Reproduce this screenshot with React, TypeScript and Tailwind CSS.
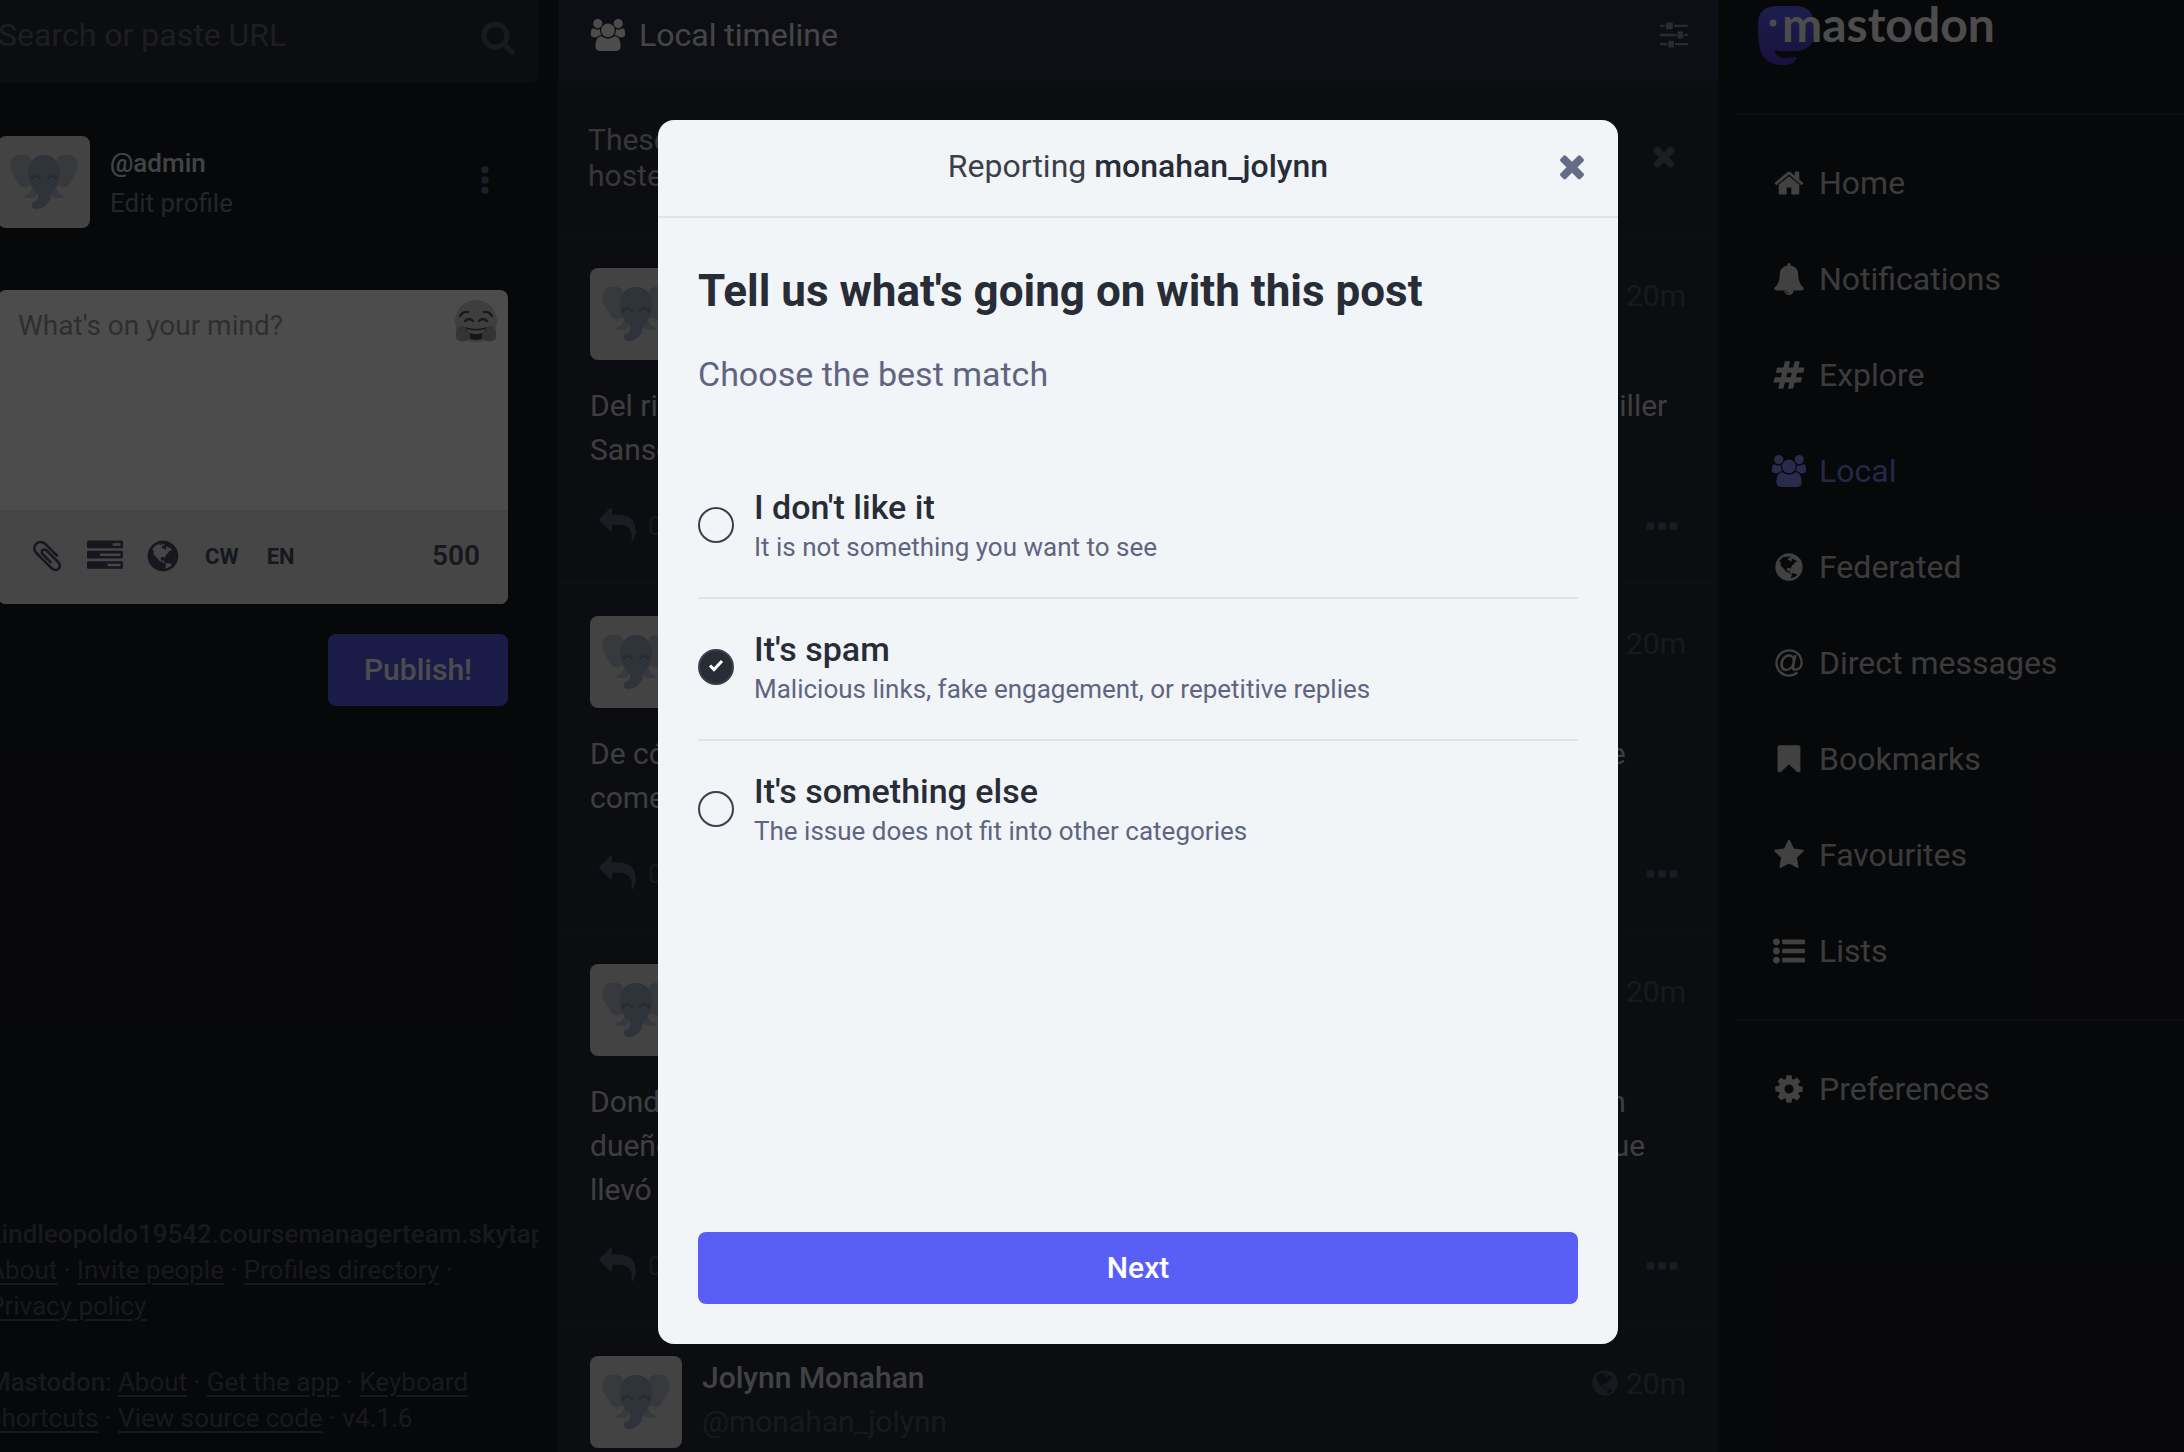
import React, { useState } from "react";

/* ---------- Icons (1792-unit grid) ---------- */

const paths = {
  home: "M1472 992v480q0 26-19 45t-45 19h-384v-384h-256v384h-384q-26 0-45-19t-19-45v-480q0-1 .5-3t.5-3l575-474 575 474q1 2 1 6zm223-69l-62 74q-8 9-21 11h-3q-13 0-21-7l-692-577-692 577q-12 8-24 7-13-2-21-11l-62-74q-8-10-7-23.5t11-21.5l719-599q32-26 76-26t76 26l244 204v-195q0-14 9-23t23-9h192q14 0 23 9t9 23v408l219 182q10 8 11 21.5t-7 23.5z",
  bell: "M912 1696q0-16-16-16-59 0-101.5-42.5t-42.5-101.5q0-16-16-16t-16 16q0 73 51.5 124.5t124.5 51.5q16 0 16-16zm816-288q0 52-38 90t-90 38h-448q0 106-75 181t-181 75-181-75-75-181h-448q-52 0-90-38t-38-90q50-42 91-88t85-119.5 74.5-158.5 50-206 19.5-260q0-152 117-282.5t307-158.5q-8-19-8-39 0-40 28-68t68-28 68 28 28 68q0 20-8 39 190 28 307 158.5t117 282.5q0 139 19.5 260t50 206 74.5 158.5 85 119.5 91 88z",
  hashtag: "M991 1024l64-256h-254l-64 256h254zm768-504l-56 224q-7 24-31 24h-327l-64 256h311q15 0 25 12 10 14 6 28l-56 224q-5 24-31 24h-327l-81 328q-7 24-31 24h-224q-16 0-26-12-9-12-6-28l78-312h-254l-81 328q-7 24-31 24h-225q-15 0-25-12-9-12-6-28l78-312h-311q-15 0-25-12-9-12-6-28l56-224q7-24 31-24h327l64-256h-311q-15 0-25-12-10-14-6-28l56-224q5-24 31-24h327l81-328q7-24 32-24h224q15 0 25 12 9 12 6 28l-78 312h254l81-328q7-24 32-24h224q15 0 25 12 9 12 6 28l-78 312h311q15 0 25 12 9 12 6 28z",
  users: "M529 896q-162 5-265 128h-134q-82 0-138-40.5t-56-118.5q0-353 124-353 6 0 43.5 21t97.5 42.5 119 21.5q67 0 133-23-5 37-5 66 0 139 81 256zm1071 637q0 120-73 189.5t-194 69.5h-874q-121 0-194-69.5t-73-189.5q0-53 3.5-103.5t14-109 26.5-108.5 43-97.5 62-81 85.5-53.5 111.5-20q10 0 43 21.5t73 48 107 48 135 21.5 135-21.5 107-48 73-48 43-21.5q61 0 111.5 20t85.5 53.5 62 81 43 97.5 26.5 108.5 14 109 3.5 103.5zm-1024-1277q0 106-75 181t-181 75-181-75-75-181 75-181 181-75 181 75 75 181zm704 384q0 159-112.5 271.5t-271.5 112.5-271.5-112.5-112.5-271.5 112.5-271.5 271.5-112.5 271.5 112.5 112.5 271.5zm576 225q0 78-56 118.5t-138 40.5h-134q-103-123-265-128 81-117 81-256 0-29-5-66 66 23 133 23 59 0 119-21.5t97.5-42.5 43.5-21q124 0 124 353zm-128-609q0 106-75 181t-181 75-181-75-75-181 75-181 181-75 181 75 75 181z",
  globe: "M896 128q209 0 385.5 103t279.5 279.5 103 385.5-103 385.5-279.5 279.5-385.5 103-385.5-103-279.5-279.5-103-385.5 103-385.5 279.5-279.5 385.5-103zm274 521q-2 1-9.5 9.5t-13.5 9.5q2 0 4.5-5t5-11 3.5-7q6-7 22-15 14-6 52-12 34-8 51 11-2-2 9.5-13t14.5-12q3-2 15-4.5t15-7.5l2-22q-12 1-17.5-7t-6.5-21q0 2-6 8 0-7-4.5-8t-11.5 1-9 1q-10-3-15-7.5t-8-16.5-4-15q-2-5-9.5-10.5t-9.5-10.5q-1-2-2.5-5.5t-3-6.5-4-5.5-5.5-2.5-7 5-7.5 10-4.5 5q-3-2-6-1.5t-4.5 1-4.5 3-5 3.5q-3 2-8.5 3t-8.5 2q15-5-1-11-10-4-16-3 9-4 7.5-12t-8.5-14h5q-1-4-8.5-8.5t-17.5-8.5-13-6q-8-5-34-9.5t-33-.5q-5 6-4.5 10.5t4 14 3.5 12.5q1 6-5.5 13t-6.5 12q0 7 14 15.5t10 21.5q-3 8-16 16t-16 12q-5 8-1.5 18.5t10.5 16.5q2 2 1.5 4t-3.5 4.5-5.5 4-6.5 3.5l-3 2q-11 5-20.5-6t-13.5-26q-7-25-16-30-23-8-29 1-5-13-41-26-25-9-58-4 6-1 0-15-7-15-19-12 3-6 4-17.5t1-13.5q3-13 12-23 1-1 7-8.5t9.5-13.5.5-6q35 4 50-11 5-5 11.5-17t10.5-17q9-6 14-5.5t14.5 5.5 14.5 5q14 1 15.5-11t-7.5-20q12 1 3-17-4-7-8-9-12-4-27 5-8 4 2 8-1-1-9.5 10.5t-16.5 17.5-16-5q-1-1-5.5-13.5t-9.5-13.5q-8 0-16 15 3-8-11-15t-24-8q19-12-8-27-7-4-20.5-5t-19.5 4q-5 7-5.5 11.5t5 8 10.5 5.5 11.5 4 8.5 3q14 10 8 14-2 1-8.5 3.5t-11.5 4.5-6 4q-3 4 0 14t-2 14q-5-5-9-17.5t-7-16.5q7 9-25 6l-10-1q-4 0-16 2t-20.5 1-13.5-8q-4-8 0-20 1-4 4-2-4-3-11-9.5t-10-8.5q-46 15-94 41 6 1 12-1 5-2 13-6.5t10-5.5q34-14 42-7l5-5q14 16 20 25-7-4-30-1-20 6-22 12 7 12 5 18-4-3-11.5-10t-14.5-11-15-5q-16 0-22 1-146 80-235 222 7 7 12 8 4 1 5 9t2.5 11 11.5-3q9 8 3 19 1-1 44 27 19 17 21 21 3 11-10 18-1-2-9-9t-9-4q-3 5 .5 18.5t10.5 12.5q-7 0-9.5 16t-2.5 35.5-1 23.5l2 1q-3 12 5.5 34.5t21.5 19.5q-13 3 20 43 6 8 8 9 3 2 12 7.5t15 10 10 10.5q4 5 10 22.5t14 23.5q-2 6 9.5 20t10.5 23q-1 0-2.5 1t-2.5 1q3 7 15.5 14t15.5 13q1 3 2 10t3 11 8 2q2-20-24-62-15-25-17-29-3-5-5.5-15.5t-4.5-14.5q2 0 6 1.5t8.5 3.5 7.5 4 2 3q-3 7 2 17.5t12 18.5 17 19 12 13q6 6 14 19.5t0 13.5q9 0 20 10.5t17 19.5q5 8 8 26t5 24q2 7 8.5 13.5t12.5 9.5l16 8 13 7q5 2 18.5 10.5t21.5 11.5q10 4 16 4t14.5-2.5 13.5-3.5q15-2 29 15t21 21q36 19 55 11-2 1 .5 7.5t8 15.5 9 14.5 5.5 8.5q5 6 18 15t18 15q6-4 7-9-3 8 7 20t18 10q14-3 14-32-31 15-49-18 0-1-2.5-5.5t-4-8.5-2.5-8.5 0-7.5 5-3q9 0 10-3.5t-2-12.5-4-13q-1-8-11-20t-12-15q-5 9-16 8t-16-9q0 1-1.5 5.5t-1.5 6.5q-13 0-15-1 1-3 2.5-17.5t3.5-22.5q1-4 5.5-12t7.5-14.5 4-12.5-4.5-9.5-17.5-2.5q-19 1-26 20-1 3-3 10.5t-5 11.5-9 7q-7 3-24 2t-24-5q-13-8-22.5-29t-9.5-37q0-10 2.5-26.5t3-25-5.5-24.5q3-2 9-9.5t10-10.5q2-1 4.5-1.5t4.5 0 4-1.5 3-6q-1-1-4-3-3-3-4-3 7 3 28.5-1.5t27.5 1.5q15 11 22-2 0-1-2.5-9.5t-.5-13.5q5 27 29 9 3 3 15.5 5t17.5 5q3 2 7 5.5t5.5 4.5 5-.5 8.5-6.5q10 14 12 24 11 40 19 44 7 3 11 2t4.5-9.5 0-14-1.5-12.5l-1-8v-18l-1-8q-15-3-18.5-12t1.5-18.5 15-18.5q1-1 8-3.5t15.5-6.5 12.5-8q21-19 15-35 7 0 11-9-1 0-5-3t-7.5-5-4.5-2q9-5 2-16 5-3 7.5-11t7.5-10q9 12 21 2 7-8 1-16 5-7 20.5-10.5t18.5-9.5q7 2 8-2t1-12 3-12q4-5 15-9t13-5l17-11q3-4 0-4 18 2 31-11 10-11-6-20 3-6-3-9.5t-15-5.5q3-1 11.5-.5t10.5-1.5q15-10-7-17-17-5-43 12zm-163 877q206-36 351-189-3-3-12.5-4.5t-12.5-3.5q-18-7-24-8 1-7-2.5-13t-8-9-12.5-8-11-7q-2-2-7-6t-7-5.5-7.5-4.5-8.5-2-10 1l-3 1q-3 1-5.5 2.5t-5.5 3-4 3 0 2.5q-21-17-36-22-5-1-11-5.5t-10.5-7-10-1.5-11.5 7q-5 5-6 15t-2 13q-7-5 0-17.5t2-18.5q-3-6-10.5-4.5t-12 4.5-11.5 8.5-9 6.5-8.5 5.5-8.5 7.5q-3 4-6 12t-5 11q-2-4-11.5-6.5t-9.5-5.5q2 10 4 35t5 38q7 31-12 48-27 25-29 40-4 22 12 26 0 7-8 20.5t-7 21.5q0 6 2 16z",
  at: "M1100 775q0-108-53.5-169t-147.5-61q-63 0-124 30.5t-110 84.5-79.5 137-30.5 180q0 112 53.5 173t150.5 61q96 0 176-66.5t122.5-166 42.5-203.5zm564 121q0 111-37 197t-98.5 135-131.5 74.5-145 27.5q-6 0-15.5.5t-16.5.5q-95 0-142-53-28-33-33-83-52 66-131.5 110t-173.5 44q-161 0-249.5-95.5t-88.5-269.5q0-157 66-290t179-210.5 246-77.5q87 0 155 35.5t106 99.5l2-19 11-56q1-6 5.5-12t9.5-6h118q5 0 13 11 5 5 3 16l-120 614q-5 24-5 48 0 39 12.5 52t44.5 13q28-1 57-5.5t73-24 77-50 57-89.5 24-137q0-292-174-466t-466-174q-130 0-248.5 51t-204 136.5-136.5 204-51 248.5 51 248.5 136.5 204 204 136.5 248.5 51q228 0 405-144 11-9 24-8t21 12l41 49q8 12 7 24-2 13-12 22-102 83-227.5 128t-258.5 45q-156 0-298-61t-245-163-163-245-61-298 61-298 163-245 245-163 298-61q344 0 556 212t212 556z",
  bookmark: "M1420 128q23 0 44 9 33 13 52.5 41t19.5 62v1289q0 34-19.5 62t-52.5 41q-19 8-44 8-48 0-83-32l-441-424-441 424q-36 33-83 33-23 0-44-9-33-13-52.5-41t-19.5-62v-1289q0-34 19.5-62t52.5-41q21-9 44-9h1048z",
  star: "M1728 647q0 22-26 48l-363 354 86 500q1 7 1 20 0 21-10.5 35.5t-30.5 14.5q-19 0-40-12l-449-236-449 236q-22 12-40 12-21 0-31.5-14.5t-10.5-35.5q0-6 2-20l86-500-364-354q-25-27-25-48 0-37 56-46l502-73 225-455q19-41 49-41t49 41l225 455 502 73q56 9 56 46z",
  list: "M384 1408q0 80-56 136t-136 56-136-56-56-136 56-136 136-56 136 56 56 136zm0-512q0 80-56 136t-136 56-136-56-56-136 56-136 136-56 136 56 56 136zm1408 416v192q0 13-9.5 22.5t-22.5 9.5h-1216q-13 0-22.5-9.5t-9.5-22.5v-192q0-13 9.5-22.5t22.5-9.5h1216q13 0 22.5 9.5t9.5 22.5zm-1408-928q0 80-56 136t-136 56-136-56-56-136 56-136 136-56 136 56 56 136zm1408 416v192q0 13-9.5 22.5t-22.5 9.5h-1216q-13 0-22.5-9.5t-9.5-22.5v-192q0-13 9.5-22.5t22.5-9.5h1216q13 0 22.5 9.5t9.5 22.5zm0-512v192q0 13-9.5 22.5t-22.5 9.5h-1216q-13 0-22.5-9.5t-9.5-22.5v-192q0-13 9.5-22.5t22.5-9.5h1216q13 0 22.5 9.5t9.5 22.5z",
  cog: "M1152 896q0-106-75-181t-181-75-181 75-75 181 75 181 181 75 181-75 75-181zm512-109v222q0 12-8 23t-20 13l-185 28q-19 54-39 91 35 50 107 138 10 12 10 25t-9 23q-27 37-99 108t-94 71q-12 0-26-9l-138-108q-44 23-91 38-16 136-29 186-7 28-36 28h-222q-14 0-24.5-8.5t-11.5-21.5l-28-184q-49-16-90-37l-141 107q-10 9-25 9-14 0-25-11-126-114-165-168-7-10-7-23 0-12 8-23 15-21 51-66.5t54-70.5q-27-50-41-99l-183-27q-13-2-21-12.5t-8-23.5v-222q0-12 8-23t19-13l186-28q14-46 39-92-40-57-107-138-10-12-10-24 0-10 9-23 26-36 98.5-107.5t94.5-71.5q13 0 26 10l138 107q44-23 91-38 16-136 29-186 7-28 36-28h222q14 0 24.5 8.5t11.5 21.5l28 184q49 16 90 37l142-107q9-9 24-9 13 0 25 10 129 119 165 170 7 8 7 22 0 12-8 23-15 21-51 66.5t-54 70.5q26 50 41 98l183 28q13 2 21 12.5t8 23.5z",
  times: "M1490 1322q0 40-28 68l-136 136q-28 28-68 28t-68-28l-294-294-294 294q-28 28-68 28t-68-28l-136-136q-28-28-28-68t28-68l294-294-294-294q-28-28-28-68t28-68l136-136q28-28 68-28t68 28l294 294 294-294q28-28 68-28t68 28l136 136q28 28 28 68t-28 68l-294 294 294 294q28 28 28 68z",
  sliders: "M128 320h256v128h-256zM896 320h768v128h-768zM512 192h256q64 0 64 64v256q0 64-64 64h-256q-64 0-64-64v-256q0-64 64-64zM128 832h896v128h-896zM1472 832h192v128h-192zM1152 704h192q64 0 64 64v256q0 64-64 64h-192q-64 0-64-64v-256q0-64 64-64zM128 1344h384v128h-384zM960 1344h704v128h-704zM640 1216h192q64 0 64 64v256q0 64-64 64h-192q-64 0-64-64v-256q0-64 64-64z",
  paperclip: "M1596 1385q0 117-79 196t-196 79q-135 0-235-100l-777-776q-113-115-113-271 0-159 110-270t269-111q158 0 273 113l605 606q10 10 10 22 0 16-30.5 46.5t-46.5 30.5q-13 0-23-10l-606-607q-79-77-181-77-106 0-179 75t-73 181q0 105 76 181l776 777q63 63 145 63 64 0 106-42t42-106q0-82-63-145l-581-581q-26-24-60-24-29 0-48 19t-19 48q0 32 25 59l410 410q10 10 10 22 0 16-31 47t-47 31q-12 0-22-10l-410-410q-63-61-63-149 0-82 57-139t139-57q88 0 149 63l581 581q100 98 100 235z",
  tasks: "M1024 1408h640v-128h-640v128zm-384-512h1024v-128h-1024v128zm640-512h384v-128h-384v128zm512 832v256q0 26-19 45t-45 19h-1664q-26 0-45-19t-19-45v-256q0-26 19-45t45-19h1664q26 0 45 19t19 45zm0-512v256q0 26-19 45t-45 19h-1664q-26 0-45-19t-19-45v-256q0-26 19-45t45-19h1664q26 0 45 19t19 45zm0-512v256q0 26-19 45t-45 19h-1664q-26 0-45-19t-19-45v-256q0-26 19-45t45-19h1664q26 0 45 19t19 45z",
  reply: "M1792 1120q0 166-127 451-3 7-10.5 24t-13.5 30-13 22q-12 17-28 17-15 0-23.5-10t-8.5-25q0-9 2.5-26.5t2.5-23.5q5-68 5-123 0-112-19.5-200.5t-54-153.5-89-112-115.5-78.5-142.5-48.5-162-25.5-174.5-7.5h-224v256q0 26-19 45t-45 19-45-19l-512-512q-19-19-19-45t19-45l512-512q19-19 45-19t45 19 19 45v256h224q713 0 875 403 53 134 53 333z",
  search: "M1216 832q0-185-131.5-316.5t-316.5-131.5-316.5 131.5-131.5 316.5 131.5 316.5 316.5 131.5 316.5-131.5 131.5-316.5zm512 832q0 52-38 90t-90 38q-54 0-90-38l-343-342q-179 124-399 124-143 0-273.5-55.5t-225-150-150-225-55.5-273.5 55.5-273.5 150-225 225-150 273.5-55.5 273.5 55.5 225 150 150 225 55.5 273.5q0 220-124 399l343 343q37 37 37 90z",
  dots: "M224 704h192q96 0 96 96v192q0 96-96 96h-192q-96 0-96-96v-192q0-96 96-96zM800 704h192q96 0 96 96v192q0 96-96 96h-192q-96 0-96-96v-192q0-96 96-96zM1376 704h192q96 0 96 96v192q0 96-96 96h-192q-96 0-96-96v-192q0-96 96-96z",
};

type IconName = keyof typeof paths;

function Icon({ name, className = "" }: { name: IconName; className?: string }) {
  return (
    <svg
      viewBox="0 0 1792 1792"
      fill="currentColor"
      aria-hidden="true"
      className={`shrink-0 overflow-visible ${className}`}
    >
      <path d={paths[name]} />
    </svg>
  );
}

function Avatar() {
  return (
    <svg viewBox="0 0 92 92" aria-hidden="true" className="h-[92px] w-[92px] shrink-0 rounded-lg bg-[#e0e0e2]">
      <g fill="#b9c0cb">
        <path d="M33 22C27 16 13 17 12.500 29c0 7 4 11 7 17 3 7 10 7 14 1z" />
        <path d="M59 22c6-6 20-5 20.500 7 0 7-4 11-7 17-3 7-10 7-14 1z" />
        <path d="M35 50c-2 6-5 9-10 10 5 4 12 3 16-4zM57 50c2 6 5 9 10 10-5 4-12 3-16-4z" />
      </g>
      <path
        d="M46 19c-11 0-16 8-16 19 0 9 4 14 10 19 1 5-1 8-5 9-3 4-1 7 4 7 9-1 14-7 14-15 5-5 9-11 9-20 0-11-5-19-16-19z"
        fill="#9dabc2"
      />
      <path d="M33 43q4-6 9 0M50 43q4-6 9 0" fill="none" stroke="#828ea6" strokeWidth="2" strokeLinecap="round" />
    </svg>
  );
}

function HugEmoji() {
  return (
    <svg viewBox="0 0 44 44" aria-hidden="true" className="h-11 w-11">
      <circle cx="22" cy="21" r="21" fill="#d0d0d0" />
      <g fill="none" stroke="#555" strokeWidth="2.4" strokeLinecap="round">
        <path d="M6 16q3-5 8-4M38 16q-3-5-8-4" />
        <path d="M11 21q4-4 8 0M25 21q4-4 8 0" />
      </g>
      <path d="M11 27q11 4 22 0-1 13-11 13T11 27z" fill="#4a4a4a" />
      <path d="M13 29q9 3 18 0-1 3-3 4-6 2-12 0-2-1-3-4z" fill="#d8d8d8" />
      <path d="M2 30q4-6 9-3l5 7q1 5-4 7-7 2-10-3zM42 30q-4-6-9-3l-5 7q-1 5 4 7 7 2 10-3z" fill="#b0b0b0" />
    </svg>
  );
}

/* ---------- Left column ---------- */

const footLink = "underline decoration-2 underline-offset-4";

function ComposePanel() {
  return (
    <aside className="-ml-8 flex w-[570px] shrink-0 flex-col overflow-hidden">
      <div className="flex h-[83px] items-start justify-between rounded-b-lg bg-[#282c37] pt-[11px] pr-[22px] pl-[30px]">
        <input
          type="search"
          aria-label="Search"
          placeholder="Search or paste URL"
          className="h-12 min-w-0 flex-1 bg-transparent text-[32px] outline-none placeholder:text-[#62646a]"
        />
        <button type="button" aria-label="Search" className="flex h-[52px] items-center text-[#55575d]">
          <Icon name="search" className="h-9 w-9" />
        </button>
      </div>

      <div className="mt-[53px] flex items-center px-[30px]">
        <Avatar />
        <div className="ml-5 flex-1 pt-0.5 text-[26px] leading-10">
          <a href="#profile" className="block font-medium text-[#d9e1e8]">@admin</a>
          <a href="#edit" className="block text-[#777d97]">Edit profile</a>
        </div>
        <button type="button" aria-label="Menu" className="mr-[7px] pb-1 text-[#606984]">
          <Icon name="dots" className="h-8 w-8 rotate-90" />
        </button>
      </div>

      <form className="mt-[62px] px-[30px]" onSubmit={(e) => e.preventDefault()}>
        <div className="overflow-hidden rounded-lg bg-white">
          <div className="relative h-[220px]">
            <textarea
              aria-label="What's on your mind?"
              placeholder="What's on your mind?"
              className="h-full w-full resize-none bg-transparent px-5 py-4 text-[28px] leading-10 outline-none placeholder:text-[#9c9ca5]"
            />
            <button type="button" aria-label="Insert emoji" className="absolute top-2.5 right-2.5">
              <HugEmoji />
            </button>
          </div>
          <div className="flex h-[94px] items-center bg-[#ebebeb] pr-7 pb-0.5 pl-[31px] text-[#4a5066]">
            <div className="flex flex-1 items-center gap-[22px]">
              <button type="button" aria-label="Add media"><Icon name="paperclip" className="h-9 w-9" /></button>
              <button type="button" aria-label="Add a poll"><Icon name="tasks" className="h-9 w-9" /></button>
              <button type="button" aria-label="Change privacy"><Icon name="globe" className="h-9 w-9" /></button>
              <button type="button" className="ml-0.5 text-[22px] font-bold">CW</button>
              <button type="button" className="ml-1.5 text-[22px] font-bold">EN</button>
            </div>
            <span className="text-[28px] font-semibold">500</span>
          </div>
        </div>
        <div className="mt-[30px] flex justify-end">
          <button
            type="submit"
            className="h-[72px] w-[180px] rounded-lg bg-[#5a5af2] pb-0.5 text-[30px] font-medium text-white"
          >
            Publish!
          </button>
        </div>
      </form>

      <footer className="mt-auto px-5 pb-4 text-[26px] leading-9 text-[#4f5466]">
        <p className="whitespace-nowrap">
          <strong className="font-medium">kindleopoldo19542.coursemanagerteam.skytap.com</strong>:
        </p>
        <p>
          <a href="#about" className={footLink}>About</a> · <a href="#invite" className={footLink}>Invite people</a> ·{" "}
          <a href="#directory" className={footLink}>Profiles directory</a> ·
          <br />
          <a href="#privacy" className={footLink}>Privacy policy</a>
        </p>
        <p className="mt-10">
          <strong className="font-medium">Mastodon</strong>: <a href="#project" className={footLink}>About</a> ·{" "}
          <a href="#app" className={footLink}>Get the app</a> · <a href="#keys" className={footLink}>Keyboard<br />shortcuts</a>{" "}
          · <a href="#source" className={footLink}>View source code</a> · v4.1.6
        </p>
      </footer>
    </aside>
  );
}

/* ---------- Timeline ---------- */

const posts: string[][] = [
  [
    "Del rigor con que el viejo molinero hablaba a los suyos nada supo ya nunca miller",
    "Sansón, que dormía junto a la puerta.",
  ],
  [
    "De cómo los vecinos se juntaron en la plaza y lo que dijeron esto antes de que",
    "comenzara la fiesta del pueblo.",
  ],
  [
    "Donde se cuenta lo que pasó en la venta aquella noche tan larga y fría, y en un",
    "dueño de la posada, que salió al camino con una lámpara a buscar al mozo que",
    "llevó los caballos al río.",
  ],
  ["En la casa nueva."],
];

function Status({ lines }: { lines: string[] }) {
  return (
    <article className="border-b-2 border-[#313543] px-8 pt-8 pb-9">
      <header className="flex">
        <Avatar />
        <div className="ml-5 flex-1 text-[30px] leading-[44px]">
          <strong className="block font-medium text-[#dcdcdc]">Jolynn Monahan</strong>
          <span className="block text-[#4f5466]">@monahan_jolynn</span>
        </div>
        <div className="flex h-[54px] items-center gap-1.5 text-[30px] text-[#4f5466]">
          <Icon name="globe" className="h-[30px] w-[30px]" />
          <time>20m</time>
        </div>
      </header>
      <p className="mt-6 text-[30px] leading-[44px] text-[#d0d0d0]">
        {lines.map((line) => (
          <span key={line} className="block whitespace-nowrap">{line}</span>
        ))}
      </p>
      <div className="mt-9 mb-0.5 flex h-9 items-center justify-between text-[#5a6078]">
        <button type="button" aria-label="Reply" className="ml-2.5 flex items-center gap-3 text-[26px] text-[#4a5066]">
          <Icon name="reply" className="h-9 w-9 text-[#5a6078]" />
          <span>0</span>
        </button>
        <button type="button" aria-label="More" className="mr-1.5">
          <Icon name="dots" className="h-9 w-9" />
        </button>
      </div>
    </article>
  );
}

function Timeline() {
  return (
    <main className="min-w-0 flex-1 overflow-hidden bg-[#282c37]">
      <header className="flex h-[81px] items-start justify-between bg-[#313543] pt-[11px] pr-7 pl-[34px]">
        <h1 className="flex h-12 items-center gap-[15px] text-[32px]">
          <Icon name="users" className="h-8 w-8" />
          <span className="text-[#e6e6e6]">Local timeline</span>
        </h1>
        <button type="button" aria-label="Show settings" className="flex h-12 items-center text-[#8f959e]">
          <Icon name="sliders" className="h-8 w-8" />
        </button>
      </header>
      <div className="flex h-[155px] items-start border-b-2 border-[#313543] pt-[41px] pr-[38px] pl-[30px] text-[30px] leading-9 text-[#b8b8ba]">
        <p className="flex-1">
          These are the most recent public posts from people whose accounts are
          <br />
          hosted by this server.
        </p>
        <button type="button" aria-label="Dismiss" className="pt-[18px] text-[#606470]">
          <Icon name="times" className="h-8 w-8" />
        </button>
      </div>
      {posts.map((lines) => (
        <Status key={lines[0]} lines={lines} />
      ))}
    </main>
  );
}

/* ---------- Navigation ---------- */

const navItems: { icon: IconName; label: string }[] = [
  { icon: "home", label: "Home" },
  { icon: "bell", label: "Notifications" },
  { icon: "hashtag", label: "Explore" },
  { icon: "users", label: "Local" },
  { icon: "globe", label: "Federated" },
  { icon: "at", label: "Direct messages" },
  { icon: "bookmark", label: "Bookmarks" },
  { icon: "star", label: "Favourites" },
  { icon: "list", label: "Lists" },
];

function NavLink({ icon, label }: { icon: IconName; label: string }) {
  const color = label === "Local" ? "text-[#8c8dff]" : "text-[#d9dadc]";
  return (
    <a href={`#${label}`} className={`flex h-24 items-center gap-3.5 px-[35px] text-[32px] ${color}`}>
      <Icon name={icon} className="h-8 w-8" />
      <span className="opacity-90">{label}</span>
    </a>
  );
}

function Navigation() {
  return (
    <nav className="w-[446px] shrink-0">
      <a href="#top" aria-label="mastodon" className="flex h-[113px] items-start pt-1.5 pl-5">
        <svg viewBox="0 0 56 59" aria-hidden="true" className="h-[59px] w-14">
          <defs>
            <linearGradient id="mark" x1="0" y1="0" x2="0" y2="1">
              <stop offset="0" stopColor="#6364ff" />
              <stop offset="1" stopColor="#563acc" />
            </linearGradient>
          </defs>
          <path
            d="M0 18C0 6 7 0 19 0h18c12 0 19 6 19 18v9c0 12-7 18-19 18-7 0-13 1-20-1 0 6 4 8 10 8 5 0 8-1 11-1 2 4-5 8-13 8C12 59 4 53 2 43 0 34 0 27 0 18z"
            fill="url(#mark)"
          />
          <circle cx="15" cy="17" r="3.4" fill="#fff" />
        </svg>
        <span className="-mt-[7px] -ml-8 font-['Lato'] text-[48px] leading-[50px] font-bold text-white">mastodon</span>
      </a>
      <hr className="border-t-2 border-[#282c37]" />
      <div className="my-5">
        {navItems.map((item) => (
          <NavLink key={item.label} {...item} />
        ))}
      </div>
      <hr className="border-t-2 border-[#282c37]" />
      <div className="my-5">
        <NavLink icon="cog" label="Preferences" />
      </div>
    </nav>
  );
}

/* ---------- Report dialog ---------- */

const reasons = [
  { id: "dislike", title: "I don't like it", text: "It is not something you want to see" },
  { id: "spam", title: "It's spam", text: "Malicious links, fake engagement, or repetitive replies" },
  { id: "other", title: "It's something else", text: "The issue does not fit into other categories" },
];

function ReportDialog() {
  const [reason, setReason] = useState("spam");
  return (
    <section
      role="dialog"
      aria-modal="true"
      aria-labelledby="report-title"
      className="flex h-[1224px] w-[960px] flex-col rounded-2xl bg-[#f1f5f8] text-[#282c37]"
    >
      <header className="relative flex h-[98px] items-center justify-center border-b-2 border-[#dfe4eb] pb-1">
        <h2 id="report-title" className="text-[32px] text-[#3b3f4a]">
          Reporting <strong className="font-medium text-[#282c37]">monahan_jolynn</strong>
        </h2>
        <button type="button" aria-label="Close" className="absolute right-7 text-[#666c88]">
          <Icon name="times" className="h-9 w-9" />
        </button>
      </header>
      <form className="flex flex-1 flex-col px-10 pb-10" onSubmit={(e) => e.preventDefault()}>
        <h3 className="mt-10 text-[44px] leading-[66px] font-bold">Tell us what's going on with this post</h3>
        <p className="mt-6 text-[34px] leading-[52px] text-[#606480]">Choose the best match</p>
        <div role="radiogroup" aria-label="Reason" className="mt-[57px]">
          {reasons.map((r) => (
            <label
              key={r.id}
              className="flex h-[142px] items-center gap-5 border-b-2 border-[#dfe4eb] pb-1 last:border-transparent"
            >
              <span className="relative grid place-items-center">
                <input
                  type="radio"
                  name="reason"
                  value={r.id}
                  checked={reason === r.id}
                  onChange={() => setReason(r.id)}
                  className="peer h-9 w-9 appearance-none rounded-full border-2 border-[#3b3f4a] checked:bg-[#282c37]"
                />
                <svg
                  viewBox="0 0 36 36"
                  fill="none"
                  stroke="#fff"
                  strokeWidth="3"
                  aria-hidden="true"
                  className="pointer-events-none absolute h-9 w-9 opacity-0 peer-checked:opacity-100"
                >
                  <path d="M12 16.500l4 4 8-8.500" />
                </svg>
              </span>
              <span>
                <span className="block text-[34px] leading-[44px] font-medium">{r.title}</span>
                <span className="block text-[26px] leading-9 text-[#606480]">{r.text}</span>
              </span>
            </label>
          ))}
        </div>
        <button type="submit" className="mt-auto h-[72px] rounded-lg bg-[#595ef7] pb-0.5 text-[30px] font-medium text-white">
          Next
        </button>
      </form>
    </section>
  );
}

export default function App() {
  return (
    <div className="relative h-screen overflow-hidden bg-[#191b22] font-['Roboto',sans-serif] text-white">
      <div className="flex h-full gap-5">
        <ComposePanel />
        <Timeline />
        <Navigation />
      </div>
      <div className="absolute inset-0 flex items-center justify-center bg-black/70 pt-3 pl-[92px]">
        <ReportDialog />
      </div>
    </div>
  );
}
